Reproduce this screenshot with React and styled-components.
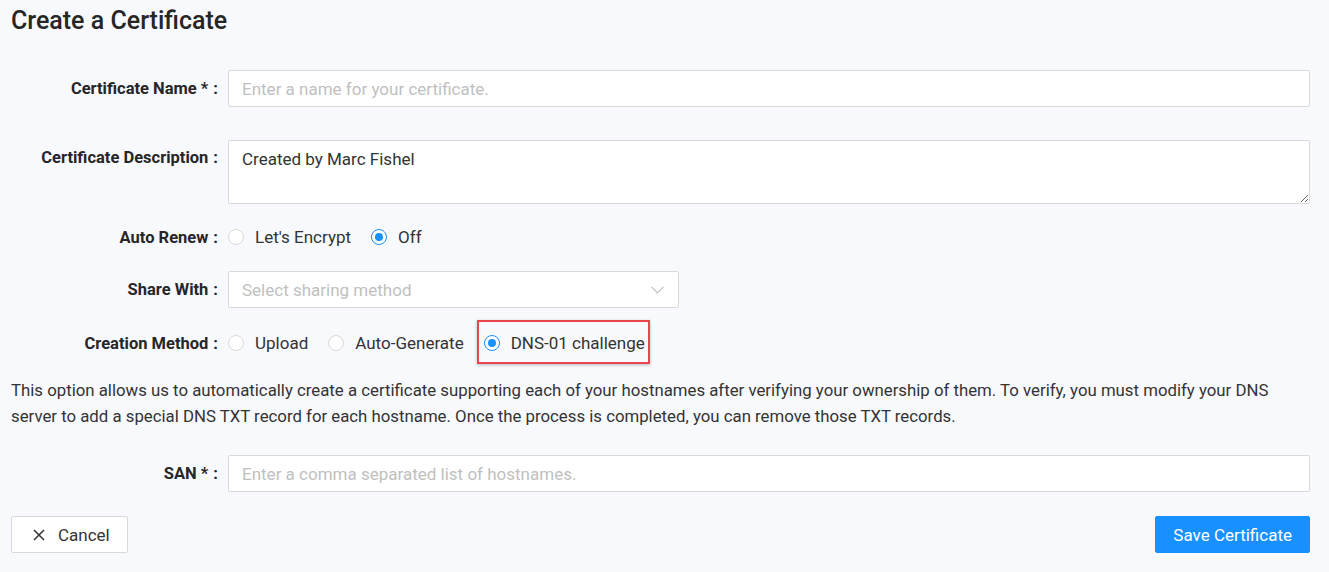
import React from "react";
import styled, { createGlobalStyle } from "styled-components";

const Global = createGlobalStyle`
  html, body { margin: 0; padding: 0; background: #f8f9fd; }
  body { font-family: Roboto, "Liberation Sans", sans-serif; color: #333; }
  * { box-sizing: border-box; }
`;

const Page = styled.div`
  padding: 6px 19px 0 11px;
  width: 1329px;
  height: 572px;
  background: #f8f9fd;
`;

const Title = styled.h2`
  margin: 0 0 34px 0;
  font-size: 25px;
  font-weight: 500;
  line-height: 30px;
  color: #262626;
`;

const Row = styled.div`
  display: grid;
  grid-template-columns: 207px 1fr;
  column-gap: 10px;
  align-items: ${(p) => (p.$top ? "start" : "center")};
  min-height: ${(p) => p.$h || 37}px;
  margin-bottom: ${(p) => p.$mb || 0}px;
`;

const Label = styled.label`
  justify-self: end;
  font-size: 16.5px;
  font-weight: 700;
  color: #262626;
  white-space: nowrap;
  padding-top: ${(p) => (p.$top ? 8 : 0)}px;
  &::after {
    content: ":";
    margin-left: 5px;
  }
`;

const Input = styled.input`
  width: 100%;
  height: 37px;
  border: 1px solid #d9d9d9;
  border-radius: 2px;
  background: #fff;
  padding: 0 13px;
  font: 17px Roboto, "Liberation Sans", sans-serif;
  color: #333;
  outline: none;
  &::placeholder { color: #bfbfbf; }
`;

const TextArea = styled.textarea`
  width: 100%;
  height: 64px;
  border: 1px solid #d9d9d9;
  border-radius: 2px;
  background: #fff;
  padding: 6px 13px;
  font: 17px/24px Roboto, "Liberation Sans", sans-serif;
  color: #333;
  outline: none;
  resize: vertical;
`;

const Select = styled.div`
  width: 451px;
  height: 37px;
  border: 1px solid #d9d9d9;
  border-radius: 2px;
  background: #fff;
  padding: 0 14px 0 13px;
  display: flex;
  align-items: center;
  justify-content: space-between;
  font-size: 17px;
  color: #bfbfbf;
`;

const RadioGroup = styled.div`
  display: flex;
  align-items: center;
  gap: 20px;
`;

const Option = styled.label`
  position: relative;
  display: inline-flex;
  align-items: center;
  gap: 11px;
  font-size: 17px;
  color: #333;
  cursor: pointer;
  ${(p) =>
    p.$highlight &&
    `
    &::after {
      content: "";
      position: absolute;
      left: -7px;
      right: -5px;
      top: -13px;
      bottom: -11px;
      border: 2px solid #e8464b;
      box-shadow: 0 1px 3px rgba(0,0,0,0.25);
      pointer-events: none;
    }
  `}
`;

const Circle = styled.span`
  width: 16px;
  height: 16px;
  border-radius: 50%;
  border: 1px solid ${(p) => (p.$checked ? "#1890ff" : "#d9d9d9")};
  background: #fff;
  display: inline-flex;
  align-items: center;
  justify-content: center;
  flex: none;
  &::after {
    content: "";
    width: 8px;
    height: 8px;
    border-radius: 50%;
    background: #1890ff;
    display: ${(p) => (p.$checked ? "block" : "none")};
  }
`;

const Help = styled.p`
  margin: 18px 0 26px 0;
  font-size: 16.8px;
  line-height: 26px;
  color: #333;
`;

const Actions = styled.div`
  display: flex;
  justify-content: space-between;
  align-items: center;
  margin-top: 24px;
`;

const Button = styled.button`
  height: 37px;
  border-radius: 2px;
  font: 17px Roboto, "Liberation Sans", sans-serif;
  display: inline-flex;
  align-items: center;
  gap: 13px;
  cursor: pointer;
  padding: ${(p) => (p.$primary ? "0 17px" : "0 17px 0 21px")};
  border: 1px solid ${(p) => (p.$primary ? "#1890ff" : "#d9d9d9")};
  background: ${(p) => (p.$primary ? "#1890ff" : "#fff")};
  color: ${(p) => (p.$primary ? "#fff" : "#333")};
`;

const Radio = ({ checked, children, highlight }) => (
  <Option $highlight={highlight}>
    <Circle $checked={checked} />
    {children}
  </Option>
);

export default function App() {
  return (
    <>
      <Global />
      <Page>
        <Title>Create a Certificate</Title>

        <Row $mb={33}>
          <Label>Certificate Name *</Label>
          <Input placeholder="Enter a name for your certificate." />
        </Row>

        <Row $mb={17} $h={64} $top>
          <Label $top>Certificate Description</Label>
          <TextArea defaultValue="Created by Marc Fishel" />
        </Row>

        <Row $h={32} $mb={18}>
          <Label>Auto Renew</Label>
          <RadioGroup>
            <Radio>Let's Encrypt</Radio>
            <Radio checked>Off</Radio>
          </RadioGroup>
        </Row>

        <Row $mb={19}>
          <Label>Share With</Label>
          <Select>
            <span>Select sharing method</span>
            <svg width="13" height="8" viewBox="0 0 13 8" fill="none">
              <path d="M0.5 0.8 L6.5 7 L12.5 0.8" stroke="#bfbfbf" strokeWidth="1.1" />
            </svg>
          </Select>
        </Row>

        <Row $h={32}>
          <Label>Creation Method</Label>
          <RadioGroup>
            <Radio>Upload</Radio>
            <Radio>Auto-Generate</Radio>
            <Radio checked highlight>DNS-01 challenge</Radio>
          </RadioGroup>
        </Row>

        <Help>
          This option allows us to automatically create a certificate supporting each of your hostnames after verifying your ownership of them. To verify, you must modify your DNS server to add a special DNS TXT record for each hostname. Once the process is completed, you can remove those TXT records.
        </Help>

        <Row>
          <Label>SAN *</Label>
          <Input placeholder="Enter a comma separated list of hostnames." />
        </Row>

        <Actions>
          <Button>
            <svg width="12" height="12" viewBox="0 0 12 12">
              <path d="M1 1 L11 11 M11 1 L1 11" stroke="#333" strokeWidth="1.5" />
            </svg>
            Cancel
          </Button>
          <Button $primary>Save Certificate</Button>
        </Actions>
      </Page>
    </>
  );
}
